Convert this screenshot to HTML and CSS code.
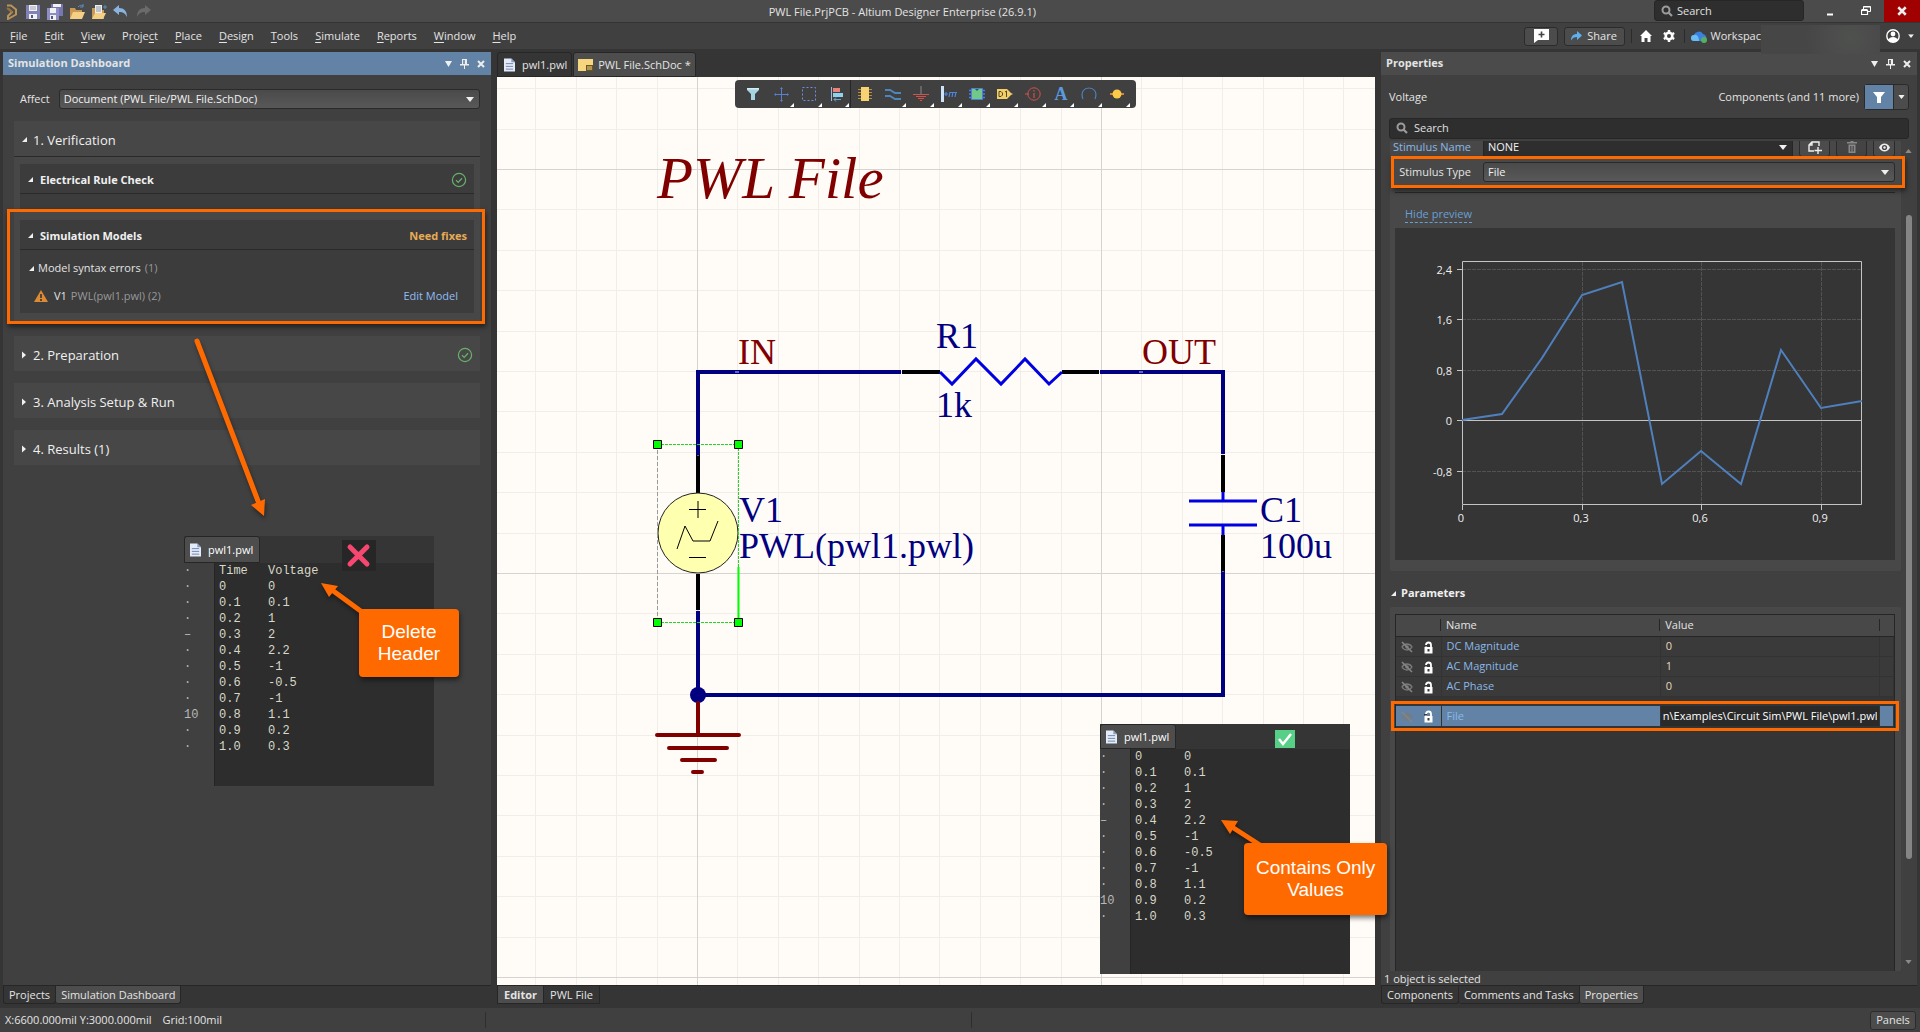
FILE: index.html
```html
<!DOCTYPE html>
<html lang="en">
<head>
    <meta charset="UTF-8">
    <meta name="viewport" content="width=device-width, initial-scale=1.0">
    <title>PWL File.PrjPCB - Altium Designer Enterprise (26.9.1)</title>
    <link rel="stylesheet" href="styles.css">
</head>
<body>
    <!-- shared icons -->
    <svg class="sprite" aria-hidden="true">
        <symbol id="i-page" viewBox="0 0 12 14">
            <path d="M0 0h8l4 4v10H0z" fill="#e4ecfa"/>
            <path d="M8 0v4h4z" fill="#8b9cc0"/>
            <path d="M2 5.5h8M2 8.5h8M2 11.5h8" stroke="#6a7ea8"/>
        </symbol>
        <symbol id="i-pin" viewBox="0 0 9 10">
            <path d="M2 0h5v5h2v1.500H5V10H4V6.500H0V5h2zM3.200 1v4h1.600V1z" fill="#eee" fill-rule="evenodd"/>
        </symbol>
        <symbol id="i-x" viewBox="0 0 8 8">
            <path d="M1 1l6 6M7 1L1 7" stroke="#eee" stroke-width="2"/>
        </symbol>
        <symbol id="i-down" viewBox="0 0 8 5">
            <path d="M0 0h8L4 5z" fill="#f0f0f0"/>
        </symbol>
        <symbol id="i-search" viewBox="0 0 12 12">
            <circle cx="5" cy="5" r="3.500" fill="none" stroke="#9b9b9b" stroke-width="2"/>
            <path d="M7.500 7.500L11 11" stroke="#9b9b9b" stroke-width="2.200"/>
        </symbol>
        <symbol id="i-ok" viewBox="0 0 16 16">
            <circle cx="8" cy="8" r="6.600" fill="none" stroke="#69b06a" stroke-width="1.200"/>
            <path d="M5 8.200l2.200 2.200L11 6.200" fill="none" stroke="#69b06a" stroke-width="1.300"/>
        </symbol>
        <symbol id="i-open" viewBox="0 0 6 6">
            <path d="M6 0v6H0z" fill="#f0f0f0"/>
        </symbol>
        <symbol id="i-closed" viewBox="0 0 6 8">
            <path d="M1 0.500l4 3.500-4 3.500z" fill="#f0f0f0"/>
        </symbol>
        <symbol id="i-hidden" viewBox="0 0 12 12">
            <path d="M1 6c2.500-4 7.500-4 10 0c-2.500 4-7.500 4-10 0z" fill="none" stroke="#7a7a7a" stroke-width="1.300"/>
            <circle cx="6" cy="6" r="1.800" fill="#7a7a7a"/>
            <path d="M1 1l10 10" stroke="#858585" stroke-width="1.500"/>
        </symbol>
        <symbol id="i-lock" viewBox="0 0 9 13">
            <path d="M2 6V4a2.500 2.500 0 0 1 5 0v2" fill="none" stroke="#fff" stroke-width="1.800"/>
            <path d="M0.500 6h8v6.500h-8z" fill="#fff"/>
            <path d="M3.500 8h2v2.500h-2zM0 4h3v1.500H0z" fill="#3a3a3a"/>
        </symbol>
        <symbol id="i-filter" viewBox="0 0 14 14">
            <path d="M1 2h12L9 7v6H5V7z"/>
        </symbol>
    </svg>

    <header class="title-bar">
        <div class="quick-access">
            <svg width="14" height="16" viewBox="0 0 14 16" fill="none" stroke="#b8935a" stroke-width="2"><path d="M2 1.500h4l5 4v5l-8 4.500v-3l4-4-4-3.500"/><path d="M2 4l5 4" stroke="#8d6f42"/></svg>
            <button type="button" aria-label="Save"><svg width="14" height="14" viewBox="0 0 14 14"><path d="M0 0h14v14H0z" fill="#8282b8"/><path d="M3 0h8v6H3zM3 9h8v5H3z" fill="#f2f2f2"/><path d="M4 2h6M4 4h6" stroke="#a0a0b8"/><path d="M5 10h2v3H5z" fill="#55558a"/></svg></button>
            <button type="button" aria-label="Save all"><svg width="16" height="16" viewBox="0 0 16 16"><path d="M4 0h12v12H4z" fill="#7777ae"/><path d="M6 0h8v3H6z" fill="#f2f2f2"/><path d="M0 4h12v12H0z" fill="#8e8ec4"/><path d="M3 4h6v5H3zM3 11h6v5H3z" fill="#f2f2f2"/><path d="M4 12h2v3H4z" fill="#55558a"/></svg></button>
            <button type="button" aria-label="Open project"><svg width="16" height="16" viewBox="0 0 16 16"><path d="M1 4h5l1 2h6v9H1z" fill="#c99a53"/><path d="M4 8h12l-3 7H1z" fill="#f5cf85"/><path d="M9 3c2-2 3-2 5-1M14 0v3h-3" stroke="#5a8fc4" fill="none"/></svg></button>
            <button type="button" aria-label="Open document"><svg width="16" height="16" viewBox="0 0 16 16"><path d="M1 4h4l1 2h7v9H1z" fill="#c99a53"/><path d="M4 1h7v9H4z" fill="#eee"/><path d="M5 3h5M5 5h5M5 7h5" stroke="#8c96a8"/><path d="M4 9h11l-3 6H1z" fill="#f5cf85"/><path d="M12 3h4M14 1v4" stroke="#5a8fc4"/></svg></button>
            <button type="button" aria-label="Undo"><svg width="16" height="14" viewBox="0 0 16 14"><path d="M6 0v3c5 0 8 3 8 9c-2-4-4-5-8-5v3L0 5z" fill="#8ab4e0"/></svg></button>
            <button type="button" aria-label="Redo"><svg width="16" height="14" viewBox="0 0 16 14"><path d="M10 0v3c-5 0-8 3-8 9c2-4 4-5 8-5v3l6-5z" fill="#6b6b6b"/></svg></button>
        </div>
        <h1 class="window-title">PWL File.PrjPCB - Altium Designer Enterprise (26.9.1)</h1>
        <div class="window-controls">
            <label class="title-search">
                <svg width="12" height="12"><use href="#i-search"/></svg>
                <input type="text" placeholder="Search" aria-label="Search">
            </label>
            <button type="button" aria-label="Minimize"><svg width="10" height="10"><path d="M2 8.500h6" stroke="#fff" stroke-width="2"/></svg></button>
            <button type="button" aria-label="Restore"><svg width="10" height="10" viewBox="0 0 10 10" fill="none" stroke="#fff"><path d="M2.500 3V.5h7v5H7"/><path d="M.5 4.500h6v4h-6zM.5 3.700h6M2.500 1h7" stroke-width="1.200"/></svg></button>
            <button type="button" class="close" aria-label="Close"><svg width="10" height="10" viewBox="0 0 8 8"><use href="#i-x"/></svg></button>
        </div>
    </header>

    <div class="menu-bar">
        <nav class="menu">
            <a href="#"><u>F</u>ile</a>
            <a href="#"><u>E</u>dit</a>
            <a href="#"><u>V</u>iew</a>
            <a href="#">Proje<u>c</u>t</a>
            <a href="#"><u>P</u>lace</a>
            <a href="#"><u>D</u>esign</a>
            <a href="#"><u>T</u>ools</a>
            <a href="#"><u>S</u>imulate</a>
            <a href="#"><u>R</u>eports</a>
            <a href="#"><u>W</u>indow</a>
            <a href="#"><u>H</u>elp</a>
        </nav>
        <div class="account-bar">
            <button type="button" class="btn comment" aria-label="Add comment"><svg width="16" height="14" viewBox="0 0 16 14"><path d="M1 0h15v11H5l-4 3z" fill="#fff"/><path d="M8.500 2.500v6M5.500 5.500h6" stroke="#444" stroke-width="1.600"/></svg></button>
            <button type="button" class="btn share"><svg width="11" height="10" viewBox="0 0 11 10"><path d="M6 0l5 4.500L6 9V6C3 6 1.500 7 0 9.500C0 5 2.500 3 6 3z" fill="#5fb0ee"/></svg>Share</button>
            <span class="bar-sep"></span>
            <button type="button" aria-label="Home"><svg width="12" height="12" viewBox="0 0 12 12"><path d="M6 0l6 6h-1.500v6H7.500V8h-3v4h-3V6H0z" fill="#fff"/></svg></button>
            <button type="button" aria-label="Settings"><svg width="12" height="12" viewBox="0 0 12 12"><circle cx="6" cy="6" r="3.300" fill="none" stroke="#fff" stroke-width="2.600"/><path d="M6 0v2M6 10v2M0.800 3l1.700 1M9.500 8l1.700 1M0.800 9l1.700-1M9.500 4l1.700-1" stroke="#fff" stroke-width="2.400"/></svg></button>
            <span class="bar-sep"></span>
            <a href="#" class="workspace"><svg width="16" height="13" viewBox="0 0 16 13"><path d="M3 11a3 3 0 0 1 0-6a5 5 0 0 1 9-1a4 4 0 0 1 2 7z" fill="#3b82e0"/><path d="M3 11a3 3 0 0 1 0-6c3-1 5 2 5 6z" fill="#69bdf2"/><circle cx="13" cy="10" r="3" fill="#55b060"/></svg><span>Workspac</span></a>
            <span class="redacted"></span>
            <button type="button" class="user" aria-label="Account"><svg width="14" height="14" viewBox="0 0 14 14"><circle cx="7" cy="7" r="6.200" fill="none" stroke="#fff" stroke-width="1.400"/><circle cx="7" cy="5" r="2.400" fill="#fff"/><path d="M2 11c2-4 8-4 10 0c-2 3-8 3-10 0z" fill="#fff"/></svg><svg width="6" height="4" viewBox="0 0 8 5"><use href="#i-down"/></svg></button>
        </div>
    </div>

    <main class="workbench">
        <section class="dock left-dock">
            <div class="panel">
                <div class="panel-header active">
                    <h2>Simulation Dashboard</h2>
                    <div class="panel-tools">
                        <button type="button" aria-label="Panel menu"><svg width="7" height="6" viewBox="0 0 8 5" preserveAspectRatio="none"><use href="#i-down"/></svg></button>
                        <button type="button" aria-label="Pin"><svg width="9" height="10"><use href="#i-pin"/></svg></button>
                        <button type="button" aria-label="Close panel"><svg width="8" height="8"><use href="#i-x"/></svg></button>
                    </div>
                </div>
                <div class="dashboard">
                    <div class="affect-row">
                        <label for="affect">Affect</label>
                        <div class="select">
                            <select id="affect"><option>Document (PWL File/PWL File.SchDoc)</option></select>
                            <svg width="8" height="5"><use href="#i-down"/></svg>
                        </div>
                    </div>

                    <div class="step">
                        <button type="button" class="step-head open"><svg width="5" height="5"><use href="#i-open"/></svg>1. Verification</button>
                        <div class="step-body">
                            <div class="card">
                                <button type="button" class="card-head"><svg width="5" height="5"><use href="#i-open"/></svg>Electrical Rule Check<svg class="ok" width="16" height="16"><use href="#i-ok"/></svg></button>
                                <div class="card-strip"></div>
                            </div>
                            <div class="card highlight">
                                <button type="button" class="card-head"><svg width="5" height="5"><use href="#i-open"/></svg>Simulation Models<span class="need-fixes">Need fixes</span></button>
                                <div class="card-body">
                                    <p class="error-group"><svg width="5" height="5"><use href="#i-open"/></svg>Model syntax errors <span>(1)</span></p>
                                    <p class="error-item"><svg width="14" height="12" viewBox="0 0 14 12"><path d="M7 0l7 12H0z" fill="#dd8b33"/><path d="M7 4v4M7 9v2" stroke="#333" stroke-width="1.600"/></svg>V1 <span>PWL(pwl1.pwl) (2)</span><a href="#">Edit Model</a></p>
                                </div>
                            </div>
                        </div>
                    </div>
                    <div class="step"><button type="button" class="step-head"><svg width="6" height="8"><use href="#i-closed"/></svg>2. Preparation<svg class="ok" width="16" height="16"><use href="#i-ok"/></svg></button></div>
                    <div class="step"><button type="button" class="step-head"><svg width="6" height="8"><use href="#i-closed"/></svg>3. Analysis Setup &amp; Run</button></div>
                    <div class="step"><button type="button" class="step-head"><svg width="6" height="8"><use href="#i-closed"/></svg>4. Results (1)</button></div>
                </div>

                <div class="file-window bad-file">
                    <div class="file-tab"><svg width="11" height="14"><use href="#i-page"/></svg>pwl1.pwl</div>
                    <div class="file-text">
<pre class="gutter">·
·
·
·
–
·
·
·
·
10
·
·</pre>
<pre>Time
0
0.1
0.2
0.3
0.4
0.5
0.6
0.7
0.8
0.9
1.0</pre>
<pre>Voltage
0
0.1
1
2
2.2
-1
-0.5
-1
1.1
0.2
0.3</pre>
                    </div>
                    <svg class="mark cross" width="34" height="31"><path d="M8 7l17 17M25 7L8 24" stroke="#f5476f" stroke-width="5" stroke-linecap="round"/></svg>
                </div>
                <svg class="arrows" width="488" height="700">
                    <path class="arrow-line" d="M194 289L255 449"/>
                    <path class="arrow-tip" d="M261 464l-13-11l14-6z"/>
                    <path class="arrow-line" d="M359 560L329 538"/>
                    <path class="arrow-tip" d="M318 531l17 3l-9 11z"/>
                </svg>
                <p class="callout delete-header">Delete<br>Header</p>
            </div>
            <div class="dock-tabs">
                <button type="button">Projects</button>
                <button type="button" class="current">Simulation Dashboard</button>
            </div>
        </section>

        <section class="document">
            <div class="doc-tabs">
                <button type="button"><svg width="11" height="14"><use href="#i-page"/></svg>pwl1.pwl</button>
                <button type="button" class="current"><svg width="15" height="12" viewBox="0 0 15 12"><path d="M0 0h15v12H0z" fill="#f6d67f"/><path d="M8 6h7v6H8z" fill="#6b5620"/><path d="M9 8h5M9 10h5" stroke="#f6d67f"/></svg>PWL File.SchDoc *</button>
            </div>
            <div class="canvas">
                <svg class="schematic">
                    <defs>
                        <pattern id="grid" x="200" y="92" width="404" height="404" patternUnits="userSpaceOnUse">
                            <path d="M40.500 0v404M81.500 0v404M121.500 0v404M162.500 0v404M202.500 0v404M242.500 0v404M283.500 0v404M323.500 0v404M364.500 0v404M0 40.500h404M0 81.500h404M0 121.500h404M0 162.500h404M0 202.500h404M0 242.500h404M0 283.500h404M0 323.500h404M0 364.500h404" stroke="#f1eeea"/>
                            <path d="M.5 0v404M0 .5h404" stroke="#d6d4d1"/>
                        </pattern>
                    </defs>
                    <rect width="100%" height="100%" fill="url(#grid)"/>
                    <text class="sheet-title" x="160" y="121">PWL File</text>

                    <!-- wires and pins -->
                    <path class="wire" d="M201 378V295H404M603 295H726V377M201 534V618H726V494"/>
                    <path class="pin" d="M405 295H443M565 295H602M201 378V416M201 497V533M726 378V415M726 458V494"/>
                    <path class="gap" d="M238 295h4M642 295h4M404 295h1M602 295h1M201 378v1M201 533v1M726 377v1M726 494v1"/>
                    <path class="part" d="M443 295L455 307L479 282L504 307L528 282L552 307L565 295"/>
                    <path class="part" d="M726 415V424M692 424H760M692 448H760M726 448V458"/>
                    <circle cx="201" cy="618" r="8" fill="#000080"/>
                    <path class="ground" d="M201 626V658M160 658H242M172 671H230M185 683H218M196 695H205"/>

                    <!-- voltage source -->
                    <circle cx="201" cy="456" r="40" fill="#ffffb0" stroke="#222"/>
                    <path d="M201 424v17M192 432.500h17M192 480.500h17M180 472L188 449L196 464H213L221 444" fill="none" stroke="#000"/>
                    <path d="M160.500 367V545" stroke="#9a9a9a" stroke-dasharray="4 2"/>
                    <path d="M160 367.500H242M160 545.500H242M241.500 367V490" stroke="#25d425" stroke-dasharray="3 1"/>
                    <path d="M241.500 490V545" stroke="#0f0" stroke-width="2"/>
                    <path d="M156.500 363.500h8v8h-8zM237.500 363.500h8v8h-8zM156.500 541.500h8v8h-8zM237.500 541.500h8v8h-8z" fill="#0f0" stroke="#000"/>

                    <text class="net" x="241" y="287">IN</text>
                    <text class="net" x="645" y="287">OUT</text>
                    <text x="439" y="271">R1</text>
                    <text x="439" y="340">1k</text>
                    <text x="242" y="445">V1</text>
                    <text x="242" y="481">PWL(pwl1.pwl)</text>
                    <text x="763" y="445">C1</text>
                    <text x="763" y="481">100u</text>
                </svg>

                <div class="active-bar">
                    <button type="button" aria-label="Filter"><svg width="16" height="16" viewBox="0 0 16 16"><path d="M2 2h12v2l-4 4v6H6V8L2 4z" fill="#a5d3e2"/><path d="M2 2h12v1.500H2z" fill="#d5edf5"/></svg></button>
                    <button type="button" class="more" aria-label="Move"><svg width="16" height="16" viewBox="0 0 16 16"><path d="M8.500 2v13M2 8.500h13" stroke="#5b7fd0"/><path d="M8.500 1l1.500 2H7zM8.500 16l1.500-2H7zM1 8.500L3 7v3zM16 8.500L14 7v3z" fill="#5b7fd0"/></svg></button>
                    <button type="button" class="more" aria-label="Select"><svg width="16" height="16" viewBox="0 0 16 16"><path d="M1.500 1.500h13v13h-13z" fill="none" stroke="#6d8ee0" stroke-dasharray="2 2"/></svg></button>
                    <button type="button" class="more sep" aria-label="Align"><svg width="16" height="16" viewBox="0 0 16 16"><path d="M2.500 1v14" stroke="#9db9e0"/><path d="M4 2h7v4H4z" fill="#e8837f"/><path d="M4 7h10v4H4z" fill="#8fd2ee"/><path d="M5 13.500h7M7 11.500l-2 2 2 2" stroke="#6aa5d8" fill="none"/></svg></button>
                    <button type="button" aria-label="Part"><svg width="16" height="16" viewBox="0 0 16 16"><path d="M1 3.500h14M1 6.500h14M1 9.500h14M1 12.500h14" stroke="#b58d3c"/><path d="M4 1h8v14H4z" fill="#f8d374"/></svg></button>
                    <button type="button" class="more" aria-label="Wire"><svg width="16" height="16" viewBox="0 0 16 16"><path d="M0 4h5l5 3h6M0 10h5l5 3h6" fill="none" stroke="#4e86bb" stroke-width="2"/></svg></button>
                    <button type="button" class="more" aria-label="Power port"><svg width="16" height="16" viewBox="0 0 16 16"><path d="M8 0v8" stroke="#8a8a8a"/><path d="M0 8.500h16M3 10.500h10M5 12.500h6M7 14.500h2" stroke="#d3524c"/></svg></button>
                    <button type="button" class="more" aria-label="Harness"><svg width="16" height="16" viewBox="0 0 16 16"><path d="M0 0h3v16H0z" fill="#cfe2f8"/><path d="M3 8h4M5 6v4M8 11l1-5M11 11l1-5M14 11l1-5M9 6.500h7" stroke="#4d84dd" stroke-width="1.200"/></svg></button>
                    <button type="button" class="more" aria-label="Sheet symbol"><svg width="16" height="16" viewBox="0 0 16 16"><path d="M0 4.500h16M0 8h16M0 11.500h16" stroke="#4d7ddd" stroke-width="1.500"/><path d="M2.500 2.500h11v11h-11z" fill="#70c98a" stroke="#4d7ddd"/><path d="M6 3h4l-2 2z" fill="#365a46"/></svg></button>
                    <button type="button" class="more" aria-label="Port"><svg width="16" height="16" viewBox="0 0 16 16"><path d="M0 3h10l4 4 2 1-2 1-4 4H0z" fill="#f2ce68"/><path d="M2 5.500h2l1.500 1.500v2L4 10.500H2zM8 6l1.500-1v6" fill="none" stroke="#554621"/></svg></button>
                    <button type="button" class="more" aria-label="Directive"><svg width="16" height="16" viewBox="0 0 16 16"><circle cx="9" cy="8" r="6.200" fill="none" stroke="#cf514c"/><path d="M0 8h4M9 7v5M9 4v1.500" stroke="#cf514c" stroke-width="1.200"/></svg></button>
                    <button type="button" class="more letter" aria-label="Text string">A</button>
                    <button type="button" class="more" aria-label="Arc"><svg width="16" height="16" viewBox="0 0 16 16"><path d="M2 13C-1 5 4 2 8 2s9 3 6 11" fill="none" stroke="#4e7fc0" stroke-width="1.200"/></svg></button>
                    <button type="button" class="more" aria-label="Junction"><svg width="16" height="16" viewBox="0 0 16 16"><path d="M1 8h14" stroke="#d38435" stroke-width="2"/><circle cx="8" cy="8" r="4.500" fill="#fbca49"/></svg></button>
                </div>

                <div class="file-window good-file">
                    <div class="file-tab"><svg width="11" height="14"><use href="#i-page"/></svg>pwl1.pwl</div>
                    <div class="file-text">
<pre class="gutter">·
·
·
·
–
·
·
·
·
10
·</pre>
<pre>0
0.1
0.2
0.3
0.4
0.5
0.6
0.7
0.8
0.9
1.0</pre>
<pre>0
0.1
1
2
2.2
-1
-0.5
-1
1.1
0.2
0.3</pre>
                    </div>
                    <svg class="mark check" width="20" height="18"><path d="M0 0h20v18H0z" fill="#57cf87"/><path d="M4 9l4 5 8-10" fill="none" stroke="#fff" stroke-width="2.500"/></svg>
                </div>
                <svg class="arrows" width="878" height="900">
                    <path class="arrow-line" d="M766 770L735 750"/>
                    <path class="arrow-tip" d="M724 743l17 1l-8 13z"/>
                </svg>
                <p class="callout only-values">Contains Only<br>Values</p>
            </div>
            <div class="dock-tabs square">
                <button type="button" class="current bold">Editor</button>
                <button type="button">PWL File</button>
            </div>
        </section>

        <section class="dock right-dock">
            <div class="panel">
                <div class="panel-header">
                    <h2>Properties</h2>
                    <div class="panel-tools">
                        <button type="button" aria-label="Panel menu"><svg width="7" height="6" viewBox="0 0 8 5" preserveAspectRatio="none"><use href="#i-down"/></svg></button>
                        <button type="button" aria-label="Pin"><svg width="9" height="10"><use href="#i-pin"/></svg></button>
                        <button type="button" aria-label="Close panel"><svg width="8" height="8"><use href="#i-x"/></svg></button>
                    </div>
                </div>
                <div class="object-row">
                    <span>Voltage</span>
                    <span class="scope">Components (and 11 more)</span>
                    <div class="filter-button">
                        <button type="button" class="on" aria-label="Filter objects"><svg width="14" height="14" fill="#fff"><use href="#i-filter"/></svg></button>
                        <button type="button" aria-label="Filter options"><svg width="7" height="4" viewBox="0 0 8 5"><use href="#i-down"/></svg></button>
                    </div>
                </div>
                <label class="panel-search">
                    <svg width="12" height="12"><use href="#i-search"/></svg>
                    <input type="text" placeholder="Search" aria-label="Search properties">
                </label>

                <div class="scroll-area">
                    <div class="scroll-content">
                        <div class="group stimulus">
                            <div class="field-row">
                                <label for="stim-name" class="link">Stimulus Name</label>
                                <div class="select dark">
                                    <select id="stim-name"><option>NONE</option></select>
                                    <svg width="8" height="5"><use href="#i-down"/></svg>
                                </div>
                                <button type="button" class="btn" aria-label="Add stimulus"><svg width="14" height="13" viewBox="0 0 14 13" fill="none" stroke="#eee" stroke-width="1.400"><path d="M6 10H1V4l3-3h7v4M4 1v3H1M10 6v7M6.500 9.500H14"/></svg></button>
                                <button type="button" class="btn off" aria-label="Delete stimulus"><svg width="10" height="12" viewBox="0 0 10 12"><path d="M0 1h10v1.500H0zM3.500 0h3v1h-3z" fill="#888"/><path d="M1.500 3.500h7V12h-7z" fill="#888"/><path d="M3.500 5v5.500M5 5v5.500M6.500 5v5.500" stroke="#444" stroke-width=".8"/></svg></button>
                                <button type="button" class="btn small" aria-label="Show"><svg width="11" height="9" viewBox="0 0 11 9"><path d="M0 4.500C2.500-.8 8.500-.8 11 4.500C8.500 9.800 2.500 9.800 0 4.500z" fill="#eee"/><circle cx="5.500" cy="4.500" r="2.600" fill="#444"/><circle cx="5.500" cy="4.500" r="1.200" fill="#eee"/></svg></button>
                            </div>
                            <div class="field-row highlight">
                                <label for="stim-type">Stimulus Type</label>
                                <div class="select">
                                    <select id="stim-type"><option>File</option></select>
                                    <svg width="8" height="5"><use href="#i-down"/></svg>
                                </div>
                            </div>
                            <hr>
                            <a href="#" class="hide-preview">Hide preview</a>
                            <svg class="preview" viewBox="0 0 500 332">
                                <path class="chart-grid" d="M67 41.500H467M67 91.500H467M67 142.500H467M67 243.500H467M187.500 34V277M306.500 34V277M426.500 34V277"/>
                                <path class="chart-axis" d="M67.500 33.500H466.500V276.500H67.500zM62 41.500h5M62 91.500h5M62 142.500h5M62 192.500H467M62 243.500h5M67.500 277v5M187.500 277v5M306.500 277v5M426.500 277v5"/>
                                <polyline class="chart-line" points="67,192 107,186 147,130 187,67 227,54 267,256 306,223 346,256 386,122 426,180 467,173"/>
                                <g class="y-labels">
                                    <text x="57" y="46">2,4</text>
                                    <text x="57" y="96">1,6</text>
                                    <text x="57" y="147">0,8</text>
                                    <text x="57" y="197">0</text>
                                    <text x="57" y="248">-0,8</text>
                                </g>
                                <g class="x-labels">
                                    <text x="66" y="294">0</text>
                                    <text x="186" y="294">0,3</text>
                                    <text x="305" y="294">0,6</text>
                                    <text x="425" y="294">0,9</text>
                                </g>
                            </svg>
                        </div>

                        <h3><svg width="5" height="5"><use href="#i-open"/></svg>Parameters</h3>
                        <div class="group parameters">
                            <div class="table-box">
                                <table>
                                    <colgroup><col class="c-icons"><col><col><col class="c-end"></colgroup>
                                    <thead>
                                        <tr><th></th><th>Name</th><th>Value</th><th></th></tr>
                                    </thead>
                                    <tbody>
                                        <tr><td class="flags"><svg width="12" height="12"><use href="#i-hidden"/></svg><svg width="9" height="13"><use href="#i-lock"/></svg></td><td class="name">DC Magnitude</td><td>0</td><td></td></tr>
                                        <tr><td class="flags"><svg width="12" height="12"><use href="#i-hidden"/></svg><svg width="9" height="13"><use href="#i-lock"/></svg></td><td class="name">AC Magnitude</td><td>1</td><td></td></tr>
                                        <tr><td class="flags"><svg width="12" height="12"><use href="#i-hidden"/></svg><svg width="9" height="13"><use href="#i-lock"/></svg></td><td class="name">AC Phase</td><td>0</td><td></td></tr>
                                        <tr class="row-gap"><td colspan="4"></td></tr>
                                        <tr class="selected"><td class="flags"><svg width="12" height="12"><use href="#i-hidden"/></svg><svg width="9" height="13"><use href="#i-lock"/></svg></td><td class="name">File</td><td class="edit"><input type="text" value="n\Examples\Circuit Sim\PWL File\pwl1.pwl" aria-label="File"></td><td></td></tr>
                                    </tbody>
                                </table>
                            </div>
                        </div>
                    </div>
                    <div class="scrollbar">
                        <svg width="7" height="4" viewBox="0 0 8 5"><path d="M0 5h8L4 0z" fill="#8a8a8a"/></svg>
                        <span class="thumb"></span>
                        <svg width="7" height="4" viewBox="0 0 8 5"><path d="M0 0h8L4 5z" fill="#8a8a8a"/></svg>
                    </div>
                </div>
                <p class="selection-info">1 object is selected</p>
            </div>
            <div class="dock-tabs">
                <button type="button">Components</button>
                <button type="button">Comments and Tasks</button>
                <button type="button" class="current">Properties</button>
            </div>
        </section>
    </main>

    <footer class="status-bar">
        <div class="status-cell">
            <span>X:6600.000mil Y:3000.000mil</span>
            <span>Grid:100mil</span>
        </div>
        <div class="status-cell"></div>
        <button type="button" class="btn">Panels</button>
    </footer>
</body>
</html>
```

FILE: styles.css
```css
* {
    box-sizing: border-box;
}

body {
    margin: 0;
    height: 100vh;
    display: flex;
    flex-direction: column;
    overflow: hidden;
    background: #353535;
    color: #e4e4e4;
    font: 11px/16px "Open Sans", "Noto Sans", sans-serif;
}

h1, h2, h3, p, pre {
    margin: 0;
    font-size: 11px;
}

button, input, select {
    font: inherit;
    color: inherit;
    background: none;
    border: 0;
    margin: 0;
    padding: 0;
    outline: 0;
}

button {
    display: flex;
    align-items: center;
    justify-content: center;
    white-space: nowrap;
}

a {
    color: inherit;
    text-decoration: none;
}

svg {
    display: block;
    flex: none;
}

.sprite {
    position: absolute;
    width: 0;
    height: 0;
}

.btn {
    background: #4c4c4c;
    border: 1px solid #2b2b2b;
    border-radius: 3px;
}

/* title bar */
.title-bar {
    display: grid;
    grid-template-columns: 20fr auto 23fr;
    height: 23px;
    background: #4b4b4b;
    border-bottom: 1px solid #343434;
}

.quick-access {
    display: flex;
    align-items: center;
    gap: 6px;
    padding-left: 5px;
}

.quick-access button {
    width: 16px;
}

.window-title {
    font-weight: 400;
    line-height: 23px;
}

.window-controls {
    display: flex;
    justify-content: flex-end;
}

.window-controls button {
    width: 36px;
    height: 22px;
}

.window-controls .close {
    background: #a00000;
}

.title-search,
.panel-search {
    display: flex;
    align-items: center;
    background: #2e2e2e;
    border: 1px solid #262626;
    border-radius: 3px;
}

.title-search {
    width: 150px;
    height: 21px;
    margin-right: 8px;
    padding-left: 6px;
    gap: 4px;
}

.title-search input {
    width: 100px;
}

input::placeholder {
    color: #e0e0e0;
    opacity: 1;
}

/* menu bar */
.menu-bar {
    display: flex;
    justify-content: space-between;
    height: 26px;
    background: #404040;
}

.menu {
    display: flex;
    align-items: center;
    gap: 17px;
    padding-left: 10px;
}

.menu a {
    white-space: nowrap;
}

.menu u {
    text-underline-offset: 2px;
}

.account-bar {
    display: flex;
    align-items: center;
    gap: 6px;
    padding-right: 6px;
}

.account-bar .btn {
    height: 19px;
}

.comment {
    width: 34px;
}

.share {
    width: 61px;
    gap: 5px;
}

.account-bar > button:not(.btn) {
    width: 17px;
}

.bar-sep {
    width: 1px;
    height: 14px;
    background: #2b2b2b;
}

.workspace {
    display: flex;
    align-items: center;
    gap: 4px;
}

/* blurred out account name */
.redacted {
    align-self: flex-start;
    position: relative;
    z-index: 2;
    width: 119px;
    height: 29px;
    margin: 2px 0 0 -6px;
    background: radial-gradient(circle at 75% 45%, #4f514f, #464646 50%);
}

.account-bar > .user.user {
    width: 28px;
    gap: 8px;
}

/* docking layout */
.workbench {
    flex: 1;
    min-height: 0;
    display: grid;
    grid-template-columns: 488px minmax(0, 1fr) 536px;
    gap: 6px;
    padding: 3px 3px 0;
}

.dock {
    display: flex;
    flex-direction: column;
    min-height: 0;
}

.panel {
    position: relative;
    flex: 1;
    min-height: 0;
    display: flex;
    flex-direction: column;
    background: #404040;
}

.panel-header {
    display: flex;
    align-items: center;
    justify-content: space-between;
    height: 23px;
    padding: 0 6px 0 5px;
    background: #4b4b4b;
}

.panel-header.active {
    background: #6283a5;
}

.panel-header h2 {
    padding-bottom: 2px;
    font-weight: 700;
}

.panel-tools {
    display: flex;
    gap: 8px;
}

.dock-tabs {
    display: flex;
    height: 23px;
    padding-bottom: 4px;
    border-top: 1px solid #262626;
}

.dock-tabs button {
    padding: 0 5px;
    border: solid #262626;
    border-width: 0 1px 1px;
    border-radius: 0 0 3px 3px;
}

.dock-tabs.square button {
    border-radius: 0;
    padding: 0 6px;
}

.dock-tabs button + button {
    border-left-width: 0;
}

.dock-tabs .current {
    background: #4d4d4d;
}

.dock-tabs .bold {
    font-weight: 700;
}

/* selects */
.select {
    position: relative;
    flex: 1;
    height: 20px;
    background: linear-gradient(#4a4a4a, #585858);
    border: 1px solid #2a2a2a;
    border-radius: 3px;
}

.select.dark {
    background: #2e2e2e;
    border-color: #262626;
    border-radius: 0;
}

.select select {
    appearance: none;
    display: block;
    width: 100%;
    height: 18px;
    padding-left: 4px;
    color: #f2f2f2;
}

.select svg {
    position: absolute;
    right: 5px;
    top: 7px;
    pointer-events: none;
}

/* simulation dashboard */
.dashboard {
    display: flex;
    flex-direction: column;
    gap: 12px;
    padding: 14px 11px;
}

.affect-row {
    display: flex;
    align-items: center;
    gap: 9px;
    padding-left: 6px;
}

.step {
    background: #474747;
}

.step-head {
    justify-content: flex-start;
    gap: 6px;
    width: 100%;
    height: 35px;
    padding: 2px 7px 0;
    font-size: 13px;
    font-weight: 500;
    color: #f0f0f0;
}

.step-head.open {
    height: 36px;
    border-bottom: 1px solid #2a2a2a;
}

.step-head.open svg {
    margin: 0 0 0 1px;
}

.ok {
    margin-left: auto;
}

.step-body {
    display: flex;
    flex-direction: column;
    gap: 9px;
    padding: 7px 6px 11px;
}

.card {
    position: relative;
    background: #3c3c3c;
}

.card-head {
    justify-content: flex-start;
    gap: 7px;
    width: 100%;
    height: 30px;
    padding: 2px 7px 0 8px;
    border-bottom: 1px solid #2a2a2a;
    font-weight: 700;
    color: #f0f0f0;
}

.card-strip {
    height: 17px;
}

.need-fixes {
    margin-left: auto;
    color: #e8ab55;
}

.card-body {
    display: flex;
    flex-direction: column;
    gap: 12px;
    padding: 10px 16px 9px 9px;
}

.card-body p {
    display: flex;
    align-items: center;
    gap: 4px;
}

.card-body span {
    color: #999;
}

.card-body .error-item {
    padding-left: 5px;
}

.error-item svg {
    margin-right: 2px;
}

.error-item a {
    margin-left: auto;
    color: #8fbcf5;
}

/* orange frames */
.highlight {
    position: relative;
}

.highlight::after {
    content: "";
    position: absolute;
    z-index: 3;
    border: 3px solid #ff6a00;
    box-shadow: 1px 3px 5px rgba(0, 0, 0, 0.5);
    pointer-events: none;
}

.card.highlight::after {
    inset: -11px -11px -11px -13px;
}

.field-row.highlight::after {
    inset: -6px -10px -6px -4px;
}

/* file windows laid over the workspace */
.file-window {
    position: absolute;
    width: 250px;
    height: 250px;
    background: #353535;
    display: flex;
    flex-direction: column;
}

.bad-file {
    left: 181px;
    top: 484px;
}

.good-file {
    left: 603px;
    top: 647px;
}

.file-tab {
    display: flex;
    align-items: center;
    gap: 7px;
    width: 76px;
    height: 25px;
    padding-left: 5px;
    background: #4d4d4d;
    border: 1px solid #262626;
    border-radius: 3px 3px 0 0;
    color: #fff;
}

.bad-file .file-tab {
    height: 27px;
}

.file-text {
    flex: 1;
    display: flex;
    background: linear-gradient(90deg, #404040 30px, #252525 30px, #252525 31px, #2d2d2d 31px);
}

.file-text pre {
    width: 49px;
    font: 12px/16px "Liberation Mono", monospace;
    color: #d8d8c8;
}

.file-text .gutter {
    width: 35px;
    color: #b8b8b8;
}

.mark {
    position: absolute;
}

.cross {
    left: 158px;
    top: 4px;
    background: #262626;
}

.check {
    left: 175px;
    top: 6px;
}

.callout {
    position: absolute;
    z-index: 4;
    padding: 12px;
    background: #ff6a00;
    border-radius: 4px;
    box-shadow: 1px 3px 5px rgba(0, 0, 0, 0.5);
    color: #fff;
    font: 19px/22px "Liberation Sans", Arial, sans-serif;
    text-align: center;
    white-space: nowrap;
}

.delete-header {
    left: 356px;
    top: 557px;
    width: 100px;
    height: 68px;
}

.only-values {
    left: 747px;
    top: 766px;
    width: 143px;
    height: 72px;
    padding: 14px 12px;
}

.arrows {
    position: absolute;
    left: 0;
    top: 0;
    z-index: 3;
    pointer-events: none;
    filter: drop-shadow(1px 3px 2px rgba(0, 0, 0, 0.4));
}

.arrow-line {
    stroke: #ff6a00;
    stroke-width: 5;
    stroke-linecap: round;
}

.arrow-tip {
    fill: #ff6a00;
}

/* document area */
.document {
    position: relative;
    z-index: 1;
    display: flex;
    flex-direction: column;
    min-height: 0;
}

.doc-tabs {
    display: flex;
    gap: 1px;
    height: 25px;
}

.doc-tabs button {
    gap: 7px;
    padding: 0 4px 0 6px;
    border: 1px solid #262626;
    border-radius: 3px 3px 0 0;
}

.doc-tabs .current {
    gap: 5px;
    padding: 0 4px;
    background: #4d4d4d;
}

.canvas {
    position: relative;
    flex: 1;
    min-height: 0;
    background: #fffcf8;
}

.schematic {
    width: 100%;
    height: 100%;
}

.schematic text {
    font: 36px "Liberation Serif", "Times New Roman", serif;
    fill: #000080;
}

.schematic .net {
    fill: #800000;
}

.schematic .sheet-title {
    font-size: 59px;
    font-style: italic;
    fill: #800000;
}

.wire, .pin, .part, .ground, .gap {
    fill: none;
    stroke-width: 4;
}

.wire {
    stroke: #000080;
}

.pin {
    stroke: #000;
}

.part {
    stroke: #0000e0;
    stroke-width: 3;
}

.ground {
    stroke: #800000;
    stroke-linecap: round;
}

.gap {
    stroke: #c8c8e0;
    stroke-width: 1;
}

.active-bar {
    position: absolute;
    left: 238px;
    top: 3px;
    display: flex;
    height: 28px;
    padding: 0 5px 0 4px;
    background: #404040;
    border-radius: 4px;
}

.active-bar button {
    position: relative;
    width: 28px;
}

.active-bar .more::after {
    content: "";
    position: absolute;
    right: 1px;
    bottom: 1px;
    border: 2px solid #fff;
    border-top-color: transparent;
    border-left-color: transparent;
}

.active-bar .sep {
    border-right: 1px solid #262626;
}

.active-bar .letter {
    font: 700 18px "Liberation Serif", serif;
    color: #5a9be0;
}

/* properties */
.object-row {
    display: flex;
    align-items: center;
    height: 43px;
    padding: 0 8px;
}

.scope {
    margin-left: auto;
}

.filter-button {
    display: flex;
    height: 26px;
    margin-left: 5px;
    background: #4c4c4c;
    border: 1px solid #2a2a2a;
    border-radius: 3px;
}

.filter-button button {
    width: 14px;
}

.filter-button .on {
    width: 29px;
    background: #6283a5;
    border-right: 1px solid #2a2a2a;
}

.panel-search {
    height: 21px;
    margin: 0 8px;
    padding: 0 0 1px 6px;
    gap: 6px;
}

.panel-search input {
    flex: 1;
}

.scroll-area {
    flex: 1;
    min-height: 0;
    display: flex;
    gap: 4px;
    margin-top: 2px;
    padding: 0 5px 0 9px;
    overflow: hidden;
}

/* scrolled slightly, so the first row is cut by the search box */
.scroll-content {
    flex: 1;
    display: flex;
    flex-direction: column;
    margin-top: -4px;
}

.group {
    padding: 0 6px 0 5px;
    background: #484848;
    border-radius: 2px;
}

.stimulus {
    padding-bottom: 11px;
}

.field-row {
    display: flex;
    align-items: center;
    gap: 6px;
    margin-bottom: 5px;
}

.field-row label {
    display: flex;
    justify-content: flex-end;
    width: 76px;
    margin-right: 6px;
    white-space: nowrap;
}

.field-row .btn {
    width: 31px;
    height: 20px;
}

.field-row .off {
    background: #444;
}

.field-row .small {
    width: 22px;
}

.link {
    color: #8ab8e8;
}

hr {
    height: 1px;
    margin: 10px 0;
    border: 0;
    background: #2a2a2a;
}

.hide-preview {
    display: inline-block;
    margin: 3px 0 5px 10px;
    border-bottom: 1px dashed #6a9fd4;
    color: #6a9fd4;
}

.preview {
    width: 100%;
    background: #353535;
}

.preview path,
.preview polyline {
    fill: none;
}

.preview .chart-grid {
    stroke: #525252;
    stroke-dasharray: 4 1;
}

.preview .chart-axis {
    stroke: #c4c4c4;
}

.preview .chart-line {
    stroke: #4f80bd;
    stroke-width: 2;
}

.preview text {
    fill: #f0f0f0;
}

.y-labels {
    text-anchor: end;
}

.x-labels {
    text-anchor: middle;
}

h3 {
    display: flex;
    flex: none;
    align-items: center;
    gap: 5px;
    height: 36px;
    padding: 8px 0 0 1px;
    color: #f0f0f0;
}

.parameters {
    flex: 1;
    display: flex;
    padding-top: 7px;
}

.table-box {
    flex: 1;
    background: #353535;
    border: solid #262626;
    border-width: 1px 1px 0;
}

table {
    width: 100%;
    table-layout: fixed;
    border-collapse: collapse;
}

.c-icons {
    width: 45px;
}

.c-end {
    width: 14px;
}

th {
    height: 21px;
    padding: 0 5px;
    background: linear-gradient(#262626, #262626) right center / 1px 12px no-repeat #484848;
    border-bottom: 1px solid #262626;
    font-weight: 400;
    text-align: left;
}

th:last-child {
    background: #484848;
}

td {
    height: 20px;
    padding: 0 5px;
    background: #3a3a3a;
    border: solid #333;
    border-width: 0 1px 1px 0;
    color: #e8d8b8;
}

.flags {
    white-space: nowrap;
}

.flags svg {
    display: inline-block;
    vertical-align: middle;
}

.flags svg + svg {
    margin-left: 11px;
}

.name {
    color: #8ab8e8;
}

.row-gap td {
    height: 10px;
    background: #353535;
    border: 0;
}

.selected {
    outline: 3px solid #ff6a00;
    outline-offset: 2px;
}

.selected td {
    background: #6283a5;
}

.selected .edit {
    padding: 0 2px;
    background: #2a2a2a;
}

.edit input {
    display: block;
    width: 100%;
    color: #fff;
}

.scrollbar {
    width: 7px;
    display: flex;
    flex-direction: column;
    align-items: center;
    padding: 8px 0 7px;
}

.thumb {
    width: 6px;
    flex: 0 0 79%;
    margin: 62px 0 auto;
    background: #858585;
    border-radius: 3px;
}

.selection-info {
    height: 14px;
    padding-left: 3px;
    line-height: 16px;
}

/* status bar */
.status-bar {
    display: flex;
    align-items: center;
    height: 24px;
    padding: 0 4px 0 0;
    background: #404040;
}

.status-cell {
    display: flex;
    gap: 11px;
    width: 486px;
    height: 16px;
    padding-left: 5px;
    border-right: 1px solid #2e2e2e;
    white-space: nowrap;
}

.status-bar .btn {
    width: 46px;
    height: 19px;
    margin-left: auto;
}
```
